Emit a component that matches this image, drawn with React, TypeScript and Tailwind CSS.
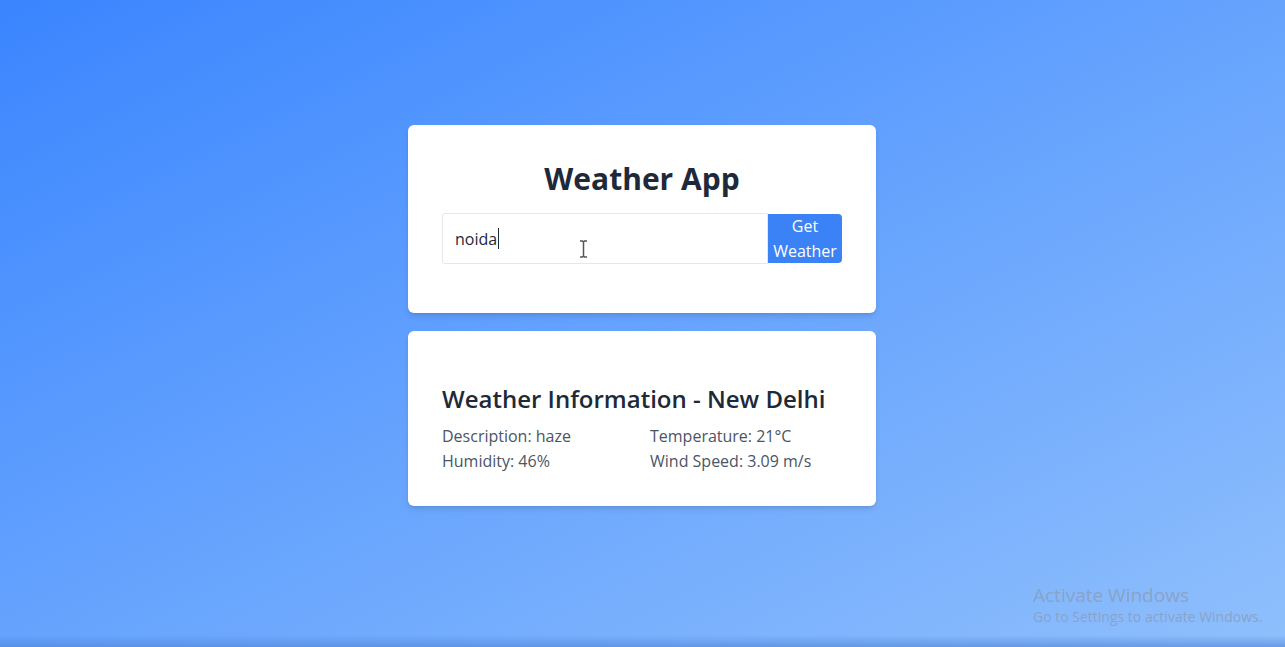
export default function App() {
  return (
    <div
      className="relative min-h-screen w-full overflow-hidden bg-gradient-to-br from-[#3a85fe] to-[#8fbffc] flex flex-col"
      style={{ fontFamily: '"Segoe UI", "Open Sans", sans-serif' }}
    >
      <main className="flex-1 flex flex-col items-center pt-[125px] gap-[18px] pr-px">
        <div className="w-[468px] bg-white rounded-md shadow-md px-[34px] pt-[34px] pb-[49px]">
          <h1 className="text-[30px] leading-[40px] font-bold text-gray-800 text-center mb-[14px]">
            Weather App
          </h1>
          <div className="flex h-[51px]">
            <div className="flex-1 flex items-center border border-gray-200 rounded-l-[3px] px-3 text-[16px] text-gray-800">
              <span>noida</span>
              <span className="w-px h-[21px] bg-gray-800 ml-px" />
            </div>
            <button className="w-[74px] my-px bg-[#3b82f6] text-white text-[16px] leading-[25px] rounded-r-[4px]">
              Get Weather
            </button>
          </div>
        </div>

        <div className="w-[468px] bg-white rounded-md shadow-md px-[34px] pt-[52px] pb-[32px]">
          <h2 className="text-[24px] leading-[32px] font-semibold text-gray-800 mb-[9px]">
            Weather Information - New Delhi
          </h2>
          <div className="grid grid-cols-2 gap-x-4 text-[16px] leading-[25px] text-gray-600">
            <p>Description: haze</p>
            <p>Temperature: 21°C</p>
            <p>Humidity: 46%</p>
            <p>Wind Speed: 3.09 m/s</p>
          </div>
        </div>
      </main>

      <div className="h-[12px] bg-gradient-to-b from-transparent to-[#4f84d6]/60" />

      <svg
        className="absolute left-[579px] top-[240px]"
        width="9"
        height="18"
        viewBox="0 0 9 18"
        fill="none"
        stroke="#555"
        strokeWidth="1.5"
      >
        <path d="M1 1h2.5l1 1 1-1H8M4.5 2v14M1 17h2.5l1-1 1 1H8" />
      </svg>

      <div className="absolute left-[1033px] top-[584px] text-[#8a9fc0]/90 leading-tight pointer-events-none">
        <p className="text-[19px]">Activate Windows</p>
        <p className="text-[14px]">Go to Settings to activate Windows.</p>
      </div>
    </div>
  )
}
